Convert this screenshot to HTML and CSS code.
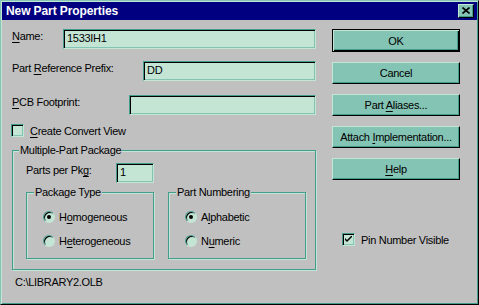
FILE: index.html
```html
<!DOCTYPE html>
<html lang="en">
<head>
    <meta charset="UTF-8">
    <title>New Part Properties</title>
    <link rel="stylesheet" href="styles.css">
</head>
<body>
    <div class="window">
        <!-- Title bar -->
        <div class="titlebar">
            <span class="title">New Part Properties</span>
            <span class="close">
                <svg width="8" height="7" viewBox="0 0 8 7">
                    <path d="M0.5 0.5 L7.5 6.5 M7.5 0.5 L0.5 6.5" stroke="#000" stroke-width="1.6" fill="none"/>
                </svg>
            </span>
        </div>

        <div class="content">
            <!-- Left side: fields -->
            <div class="left">
                <div class="row row-name">
                    <label><u>N</u>ame:</label>
                    <div class="field field-name">1533IH1</div>
                </div>
                <div class="row row-prefix">
                    <label>Part <u>R</u>eference Prefix:</label>
                    <div class="field field-prefix">DD</div>
                </div>
                <div class="row row-pcb">
                    <label><u>P</u>CB Footprint:</label>
                    <div class="field field-pcb"></div>
                </div>
                <div class="check check-convert">
                    <span class="box"></span>
                    <span><u>C</u>reate Convert View</span>
                </div>

                <div class="group group-main">
                    <div class="legend">Multiple-Part Package</div>
                    <div class="row row-parts">
                        <label>Parts per Pk<u>g</u>:</label>
                        <div class="field field-parts">1</div>
                    </div>
                    <div class="subgroups">
                        <div class="group group-type">
                            <div class="legend">Package Type</div>
                            <div class="radio">
                                <span class="dot checked"></span>
                                <span>H<u>o</u>mogeneous</span>
                            </div>
                            <div class="radio">
                                <span class="dot"></span>
                                <span>H<u>e</u>terogeneous</span>
                            </div>
                        </div>
                        <div class="group group-numbering">
                            <div class="legend">Part Numbering</div>
                            <div class="radio">
                                <span class="dot checked"></span>
                                <span>A<u>l</u>phabetic</span>
                            </div>
                            <div class="radio">
                                <span class="dot"></span>
                                <span>N<u>u</u>meric</span>
                            </div>
                        </div>
                    </div>
                </div>

                <div class="path">C:\LIBRARY2.OLB</div>
            </div>

            <!-- Right side: buttons -->
            <div class="right">
                <button class="btn btn-default"><span>OK</span></button>
                <button class="btn"><span>Cancel</span></button>
                <button class="btn"><span>Part <u>A</u>liases...</span></button>
                <button class="btn"><span>Attach <u>I</u>mplementation...</span></button>
                <button class="btn"><span><u>H</u>elp</span></button>
                <div class="check check-pin">
                    <span class="box">
                        <svg width="7" height="7" viewBox="0 0 7 7">
                            <path d="M0 2 L0 4 L2 6 L7 1 L7 -1 L2 4 Z" fill="#000"/>
                        </svg>
                    </span>
                    <span>Pin Number Visible</span>
                </div>
            </div>
        </div>
    </div>
</body>
</html>
```

FILE: styles.css
```css
* {
    box-sizing: border-box;
}
body {
    margin: 0;
    font-family: "Liberation Sans", Arial, sans-serif;
    font-size: 11px;
    letter-spacing: -0.3px;
    color: #000;
    background: #c0c0c0;
}
u {
    text-decoration-thickness: 1px;
    text-underline-offset: 2px;
}
.window {
    width: 479px;
    height: 305px;
    padding: 1px;
    background: #c0c0c0;
    border: 1px solid;
    border-color: #84c4b4 #000 #000 #84c4b4;
    box-shadow: inset 1px 1px 0 #c4e4d4, inset -1px -1px 0 #449c8c;
}
.titlebar {
    height: 18px;
    background: #000080;
    display: flex;
    align-items: center;
    justify-content: space-between;
    padding: 0 3px 0 4px;
}
.title {
    color: #fff;
    font-weight: bold;
    font-size: 12px;
    letter-spacing: -0.1px;
}
.close {
    width: 16px;
    height: 14px;
    background: #84c4b4;
    border: 1px solid;
    border-color: #c4e4d4 #000 #000 #c4e4d4;
    box-shadow: inset -1px -1px 0 #449c8c;
    display: flex;
    align-items: center;
    justify-content: center;
    padding-bottom: 1px;
}
.content {
    display: flex;
    gap: 16px;
    padding-left: 10px;
}
.left {
    width: 304px;
    display: flex;
    flex-direction: column;
    padding-top: 9px;
}
.row {
    display: flex;
    align-items: flex-start;
    height: 20px;
}
.row label {
    padding-top: 1px;
    line-height: 13px;
}
.row-prefix {
    margin-top: 12px;
}
.row-pcb {
    margin-top: 14px;
}
.field {
    margin-left: auto;
    height: 20px;
    padding-left: 3px;
    line-height: 17px;
    background: #c4e4d4;
    border: 1px solid;
    border-color: #449c8c #c4e4d4 #c4e4d4 #449c8c;
    box-shadow: inset 1px 1px 0 #000, inset -1px -1px 0 #84c4b4;
}
.field-name {
    width: 253px;
}
.field-prefix {
    width: 173px;
}
.field-pcb {
    width: 187px;
}
.field-parts {
    width: 38px;
}
.check {
    display: flex;
    align-items: center;
    gap: 6px;
    height: 13px;
}
.check-convert {
    margin-top: 9px;
    margin-left: -1px;
}
.box {
    width: 13px;
    height: 13px;
    background: #c4e4d4;
    border: 1px solid;
    border-color: #449c8c #c4e4d4 #c4e4d4 #449c8c;
    box-shadow: inset 1px 1px 0 #000, inset -1px -1px 0 #84c4b4;
    display: flex;
    align-items: center;
    justify-content: center;
}
.group {
    border: 1px solid #449c8c;
    box-shadow: inset 1px 1px 0 #c4e4d4, 1px 1px 0 #c4e4d4;
}
.legend {
    width: fit-content;
    margin: -7px 0 0 6px;
    padding: 0 1px;
    line-height: 13px;
    background: #c0c0c0;
}
.group-main {
    margin-top: 13px;
    height: 120px;
}
.row-parts {
    margin: 6px 0 0 13px;
    width: 128px;
}
.subgroups {
    display: flex;
    gap: 14px;
    margin: 9px 0 0 13px;
}
.group-type {
    width: 128px;
    height: 67px;
}
.group-numbering {
    width: 138px;
    height: 67px;
}
.group-type .legend,
.group-numbering .legend {
    margin-left: 7px;
}
.radio {
    display: flex;
    align-items: center;
    gap: 4px;
    height: 12px;
    margin: 12px 0 0 16px;
}
.dot {
    width: 12px;
    height: 12px;
    border-radius: 50%;
    background: #c4e4d4;
    border: 1px solid;
    border-color: #449c8c #c4e4d4 #c4e4d4 #449c8c;
    box-shadow: inset 1px 1px 0 #000;
    display: flex;
    align-items: center;
    justify-content: center;
}
.dot.checked::after {
    content: "";
    width: 4px;
    height: 4px;
    border-radius: 50%;
    background: #000;
}
.path {
    margin: 6px 0 0 3px;
    line-height: 13px;
}
.right {
    width: 128px;
    display: flex;
    flex-direction: column;
    gap: 10px;
    padding-top: 9px;
}
.btn {
    height: 22px;
    padding: 0;
    font: inherit;
    letter-spacing: inherit;
    color: #000;
    background: #84c4b4;
    border: 1px solid;
    border-color: #c4e4d4 #000 #000 #c4e4d4;
    box-shadow: inset -1px -1px 0 #449c8c;
    display: flex;
    align-items: center;
    justify-content: center;
}
.btn-default {
    height: 23px;
    border-color: #000;
    box-shadow: inset 1px 1px 0 #c4e4d4, inset -1px -1px 0 #000, inset -2px -2px 0 #449c8c;
}
.check-pin {
    margin: 43px 0 0 10px;
}
```
